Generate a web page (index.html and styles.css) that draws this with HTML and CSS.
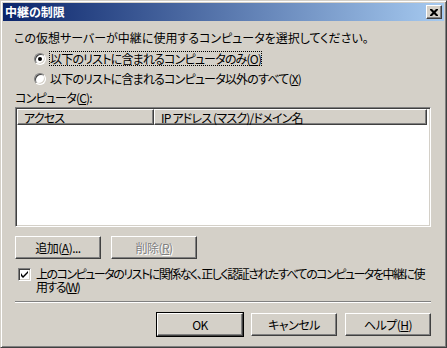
FILE: index.html
```html
<!DOCTYPE html>
<html lang="ja">
  <head>
    <meta charset="UTF-8" />
    <title>中継の制限</title>
    <link rel="stylesheet" href="styles.css">
  </head>
  <body>
    <div class="window">
      <div class="titlebar">
        <span class="title">中継の制限</span>
        <button class="close" aria-label="閉じる">
          <svg width="8" height="7" viewBox="0 0 8 7">
            <path d="M0 0h2l2 2 2-2h2v1l-2.5 2.5 2.5 2.5v1h-2l-2-2-2 2h-2v-1l2.5-2.5-2.5-2.5z" fill="#000" />
          </svg>
        </button>
      </div>
      <div class="content">
        <p class="intro">この仮想サーバーが中継に使用するコンピュータを選択してください。</p>

        <div class="radios">
          <label class="radio">
            <span class="radio-box checked"></span>
            <span class="focus">以下のリストに含まれるコンピュータのみ(<u>O</u>)</span>
          </label>
          <label class="radio">
            <span class="radio-box"></span>
            <span>以下のリストに含まれるコンピュータ以外のすべて(<u>X</u>)</span>
          </label>
        </div>

        <p class="list-label">コンピュータ(<u>C</u>):</p>
        <div class="listview">
          <div class="list-head">
            <div class="col col-access">アクセス</div>
            <div class="col col-ip">IP アドレス (マスク)/ドメイン名</div>
          </div>
          <div class="list-body"></div>
        </div>

        <div class="list-buttons">
          <button class="btn">追加(<u>A</u>)...</button>
          <button class="btn" disabled>削除(<u>R</u>)</button>
        </div>

        <label class="check">
          <span class="check-box">
            <svg width="7" height="7" viewBox="0 0 7 7">
              <path d="M0 2v3l2 2 5-5v-2l-5 5z" fill="#000" />
            </svg>
          </span>
          <span class="check-text">上のコンピュータのリストに関係なく、正しく認証されたすべてのコンピュータを中継に使<br>用する(<u>W</u>)</span>
        </label>

        <hr class="sep" />

        <div class="dialog-buttons">
          <button class="btn default">OK</button>
          <button class="btn">キャンセル</button>
          <button class="btn">ヘルプ(<u>H</u>)</button>
        </div>
      </div>
    </div>
  </body>
</html>
```

FILE: styles.css
```css
body {
  margin: 0;
  background-color: #d4d0c8;
  font-family: "Noto Sans CJK JP", "Liberation Sans", sans-serif;
  font-size: 12px;
  font-feature-settings: "palt";
  color: #000;
}

.window {
  width: 447px;
  height: 348px;
  box-sizing: border-box;
  padding: 2px;
  border: 1px solid;
  border-color: #d4d0c8 #404040 #404040 #d4d0c8;
  box-shadow: inset 1px 1px #fff, inset -1px -1px #808080;
  background-color: #d4d0c8;
}

.titlebar {
  height: 18px;
  display: flex;
  align-items: center;
  justify-content: space-between;
  padding: 0 2px 0 2px;
  background: linear-gradient(to right, #0a246a, #a6caf0);
}

.title {
  color: #fff;
  font-weight: bold;
  line-height: 18px;
}

.close {
  width: 16px;
  height: 14px;
  padding: 0;
  display: flex;
  align-items: center;
  justify-content: center;
  background-color: #d4d0c8;
  border: 1px solid;
  border-color: #fff #404040 #404040 #fff;
  box-shadow: inset -1px -1px #808080;
}

.content {
  padding: 10px 13px 0 12px;
  line-height: 13px;
  letter-spacing: -0.8px;
}

p {
  margin: 0;
}

.intro {
  margin-left: -1px;
  letter-spacing: 0;
}

.radios {
  display: flex;
  flex-direction: column;
  gap: 7px;
  margin: 8px 0 0 19px;
}

.radio {
  display: flex;
  align-items: center;
  gap: 4px;
  height: 13px;
}

.radio-box {
  width: 12px;
  height: 12px;
  box-sizing: border-box;
  border-radius: 50%;
  border: 1px solid;
  border-color: #808080 #fff #fff #808080;
  background-color: #fff;
  box-shadow: inset 1px 1px #404040, inset -1px -1px #d4d0c8;
  position: relative;
}

.radio-box.checked::after {
  content: "";
  position: absolute;
  left: 3px;
  top: 3px;
  width: 4px;
  height: 4px;
  border-radius: 50%;
  background-color: #000;
}

.focus {
  outline: 1px dotted #000;
  outline-offset: 0;
}

.list-label {
  margin-top: 6px;
}

.listview {
  margin-top: 3px;
  height: 120px;
  box-sizing: border-box;
  border: 1px solid;
  border-color: #808080 #fff #fff #808080;
  box-shadow: inset 1px 1px #404040, inset -1px -1px #d4d0c8;
  padding: 1px;
  background-color: #fff;
}

.list-head {
  display: flex;
  height: 16px;
  margin-right: 2px;
}

.col {
  box-sizing: border-box;
  height: 16px;
  padding: 1px 0 0 6px;
  line-height: 13px;
  background-color: #d4d0c8;
  border: 1px solid;
  border-color: #fff #404040 #404040 #fff;
  box-shadow: inset -1px -1px #808080;
}

.col-access {
  width: 137px;
}

.col-ip {
  flex: 1;
}

.list-buttons {
  display: flex;
  gap: 10px;
  margin-top: 9px;
}

.btn {
  width: 86px;
  height: 23px;
  padding: 0;
  font: inherit;
  line-height: 13px;
  letter-spacing: -0.5px;
  color: #000;
  background-color: #d4d0c8;
  border: 1px solid;
  border-color: #fff #404040 #404040 #fff;
  box-shadow: inset -1px -1px #808080;
}

.btn:disabled {
  color: #808080;
  text-shadow: 1px 1px #fff;
}

.btn.default {
  outline: 1px solid #000;
  outline-offset: 0;
}

.check {
  display: flex;
  align-items: flex-start;
  gap: 5px;
  margin-top: 8px;
  margin-left: 3px;
}

.check-box {
  flex: none;
  width: 13px;
  height: 13px;
  box-sizing: border-box;
  margin-top: 1px;
  display: flex;
  align-items: center;
  justify-content: center;
  border: 1px solid;
  border-color: #808080 #fff #fff #808080;
  box-shadow: inset 1px 1px #404040, inset -1px -1px #d4d0c8;
  background-color: #fff;
}

.check-text {
  white-space: nowrap;
  letter-spacing: -1.5px;
}

.sep {
  margin: 8px 0 0 0;
  height: 0;
  border: 0;
  border-top: 1px solid #808080;
  border-bottom: 1px solid #fff;
}

.dialog-buttons {
  display: flex;
  justify-content: flex-end;
  gap: 8px;
  margin-top: 10px;
}
```
